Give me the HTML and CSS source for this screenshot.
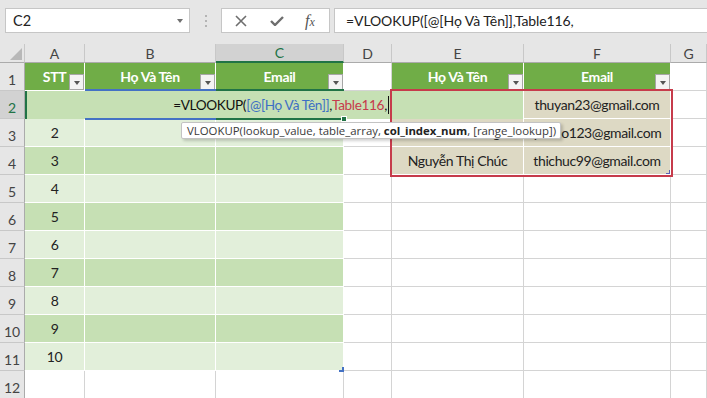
FILE: index.html
```html
<!DOCTYPE html>
<html>
<head>
<meta charset="utf-8">
<title>VLOOKUP</title>
<link rel="stylesheet" href="styles.css">
</head>
<body>
<div class="app">
	<!-- thanh công thức -->
	<div class="fbar">
		<div class="namebox">C2<span class="caret"></span></div>
		<div class="grip"><i></i><i></i><i></i></div>
		<div class="fbtns">
			<svg width="12" height="12" viewBox="0 0 12 12"><path d="M1 1L11 11M11 1L1 11" stroke="#6e6e6e" stroke-width="1.6" fill="none"/></svg>
			<svg width="14" height="10" viewBox="0 0 14 10"><path d="M1 5L5 9L13 1" stroke="#6e6e6e" stroke-width="2.4" fill="none"/></svg>
			<span class="fx">f<small>x</small></span>
		</div>
		<div class="finput">=VLOOKUP([@[Họ Và Tên]],Table116,</div>
	</div>

	<!-- bảng tính -->
	<div class="sheet">
		<div class="c cor"><span class="tri"></span></div>
		<div class="c hd">A</div>
		<div class="c hd">B</div>
		<div class="c hd on">C</div>
		<div class="c hd">D</div>
		<div class="c hd">E</div>
		<div class="c hd">F</div>
		<div class="c hd">G</div>

		<div class="c rh">1</div>
		<div class="c th">STT<span class="flt"></span></div>
		<div class="c th">Họ Và Tên<span class="flt"></span></div>
		<div class="c th">Email<span class="flt"></span></div>
		<div class="c"></div>
		<div class="c th">Họ Và Tên<span class="flt"></span></div>
		<div class="c th">Email<span class="flt"></span></div>
		<div class="c"></div>

		<div class="c rh on">2</div>
		<div class="c b1">1</div><div class="c b1"></div><div class="c b1"></div>
		<div class="c"></div>
		<div class="c sel"></div><div class="c sel">thuyan23@gmail.com</div>
		<div class="c"></div>

		<div class="c rh">3</div>
		<div class="c b2">2</div><div class="c b2"></div><div class="c b2"></div>
		<div class="c"></div>
		<div class="c sel">Trần Văn Hùng</div><div class="c sel">yenho123@gmail.com</div>
		<div class="c"></div>

		<div class="c rh">4</div>
		<div class="c b1">3</div><div class="c b1"></div><div class="c b1"></div>
		<div class="c"></div>
		<div class="c sel">Nguyễn Thị Chúc</div><div class="c sel">thichuc99@gmail.com</div>
		<div class="c"></div>

		<div class="c rh">5</div>
		<div class="c b2">4</div><div class="c b2"></div><div class="c b2"></div>
		<div class="c"></div><div class="c"></div><div class="c"></div><div class="c"></div>

		<div class="c rh">6</div>
		<div class="c b1">5</div><div class="c b1"></div><div class="c b1"></div>
		<div class="c"></div><div class="c"></div><div class="c"></div><div class="c"></div>

		<div class="c rh">7</div>
		<div class="c b2">6</div><div class="c b2"></div><div class="c b2"></div>
		<div class="c"></div><div class="c"></div><div class="c"></div><div class="c"></div>

		<div class="c rh">8</div>
		<div class="c b1">7</div><div class="c b1"></div><div class="c b1"></div>
		<div class="c"></div><div class="c"></div><div class="c"></div><div class="c"></div>

		<div class="c rh">9</div>
		<div class="c b2">8</div><div class="c b2"></div><div class="c b2"></div>
		<div class="c"></div><div class="c"></div><div class="c"></div><div class="c"></div>

		<div class="c rh">10</div>
		<div class="c b1">9</div><div class="c b1"></div><div class="c b1"></div>
		<div class="c"></div><div class="c"></div><div class="c"></div><div class="c"></div>

		<div class="c rh">11</div>
		<div class="c b2">10</div><div class="c b2"></div><div class="c b2"></div>
		<div class="c"></div><div class="c"></div><div class="c"></div><div class="c"></div>

		<div class="c rh">12</div>
		<div class="c"></div><div class="c"></div><div class="c"></div>
		<div class="c"></div><div class="c"></div><div class="c"></div><div class="c"></div>

		<!-- ô đang sửa C2 -->
		<div class="edit">=VLOOKUP(<span class="r1">[@[Họ Và Tên]]</span>,<span class="r2">Table116</span>,<span class="cur"></span></div>
		<div class="refb"></div>
		<div class="actc"><span class="handle"></span></div>
		<div class="rng"><span class="rmark"></span></div>
		<div class="tip">VLOOKUP(lookup_value, table_array, <b>col_index_num</b>, [range_lookup])</div>
		<div class="rsz"></div>
	</div>
</div>
</body>
</html>
```

FILE: styles.css
```css
body{
	margin:0;
	background:#fff;
}
.app{
	width:707px;
	height:398px;
	overflow:hidden;
	font-family:Lato, "Noto Sans", sans-serif;
}
.fbar{
	height:44px;
	background:#e6e6e6;
	display:flex;
	align-items:flex-start;
	padding:8px 0 0 5px;
	box-sizing:border-box;
}
.namebox{
	width:185px;
	height:25px;
	box-sizing:border-box;
	background:#fff;
	border:1px solid #c6c6c6;
	font-size:14.5px;
	color:#222;
	padding-left:7px;
	line-height:23px;
	position:relative;
}
.caret{
	position:absolute;
	right:6px;
	top:10px;
	border-left:3px solid transparent;
	border-right:3px solid transparent;
	border-top:4px solid #707070;
}
.grip{
	width:31px;
	height:25px;
	display:flex;
	flex-direction:column;
	align-items:center;
	justify-content:center;
	gap:3px;
}
.grip i{
	width:2px;
	height:2px;
	background:#b4b4b4;
}
.fbtns{
	width:109px;
	height:25px;
	box-sizing:border-box;
	background:#fff;
	border:1px solid #c6c6c6;
	display:flex;
	align-items:center;
	padding-left:13px;
	gap:23px;
}
.fx{
	font-family:"Liberation Serif", serif;
	font-style:italic;
	font-size:16px;
	color:#555;
	margin-left:-2px;
}
.fx small{
	font-size:12px;
}
.finput{
	flex:1;
	margin-left:4px;
	height:25px;
	box-sizing:border-box;
	background:#fff;
	border:1px solid #c6c6c6;
	border-right:none;
	font-size:14px;
	letter-spacing:-0.1px;
	color:#222;
	padding-left:11px;
	line-height:24px;
}

.sheet{
	display:grid;
	grid-template-columns:25px 60px 131px 128px 48px 132px 147px 36px;
	grid-template-rows:19px repeat(12, 28px);
	position:relative;
	font-size:14px;
	letter-spacing:-0.4px;
	color:#222;
}
.c{
	box-sizing:border-box;
	border-right:1px solid #d4d4d4;
	border-bottom:1px solid #d4d4d4;
	display:flex;
	align-items:center;
	justify-content:center;
	white-space:nowrap;
	overflow:hidden;
	position:relative;
}
.cor{
	background:#e6e6e6;
	border-right-color:#c8c8c8;
	border-bottom-color:#ababab;
}
.tri{
	position:absolute;
	right:2px;
	bottom:2px;
	border-left:12px solid transparent;
	border-bottom:12px solid #b8b8b8;
}
.hd{
	background:#e6e6e6;
	color:#444;
	border-right-color:#c8c8c8;
	border-bottom-color:#ababab;
	font-size:14px;
	letter-spacing:0;
}
.hd.on{
	background:#d2d2d2;
	color:#217346;
	border-bottom:2px solid #217346;
}
.rh{
	background:#e6e6e6;
	color:#444;
	border-right-color:#ababab;
	border-bottom-color:#c8c8c8;
	align-items:flex-end;
	padding-bottom:2px;
	font-size:14px;
	letter-spacing:0;
}
.rh.on{
	background:#d2d2d2;
	color:#217346;
}
.th{
	background:#70ad47;
	color:#fff;
	font-weight:bold;
	border-color:#fff;
}
.flt{
	position:absolute;
	right:0;
	bottom:0;
	width:15px;
	height:16px;
	box-sizing:border-box;
	background:#f3f3f3;
	border:1px solid #a6a6a6;
}
.flt:after{
	content:"";
	position:absolute;
	left:4px;
	top:6px;
	border-left:3px solid transparent;
	border-right:3px solid transparent;
	border-top:4px solid #555;
}
.b1{
	background:#c6e0b4;
	border-color:#fff;
}
.b2{
	background:#e2efda;
	border-color:#fff;
}
.sel{
	background:#ddd9c4;
	border-color:#fff;
}

/* lớp phủ khi đang sửa công thức */
.edit{
	position:absolute;
	left:25px;
	top:47px;
	width:498px;
	height:28px;
	box-sizing:border-box;
	background:#c6e0b4;
	border-left:2px solid #217346;
	display:flex;
	align-items:center;
	justify-content:center;
	padding-left:12px;
	font-size:13.6px;
	letter-spacing:-0.35px;
	color:#111;
	white-space:nowrap;
}
.r1{
	color:#3d6fc4;
}
.r2{
	color:#c63b4b;
}
.cur{
	width:1px;
	height:18px;
	background:#111;
	margin-left:1px;
}
.refb{
	position:absolute;
	left:85px;
	top:45px;
	width:131px;
	height:31px;
	box-sizing:border-box;
	border-top:2px solid #4472c4;
	border-bottom:2px solid #4472c4;
}
.actc{
	position:absolute;
	left:216px;
	top:45px;
	width:128px;
	height:31px;
	box-sizing:border-box;
	border-top:2px solid #217346;
	border-bottom:2px solid #217346;
}
.handle{
	position:absolute;
	right:-3px;
	bottom:-4px;
	width:6px;
	height:6px;
	box-sizing:border-box;
	background:#217346;
	border:1px solid #fff;
}
.rng{
	position:absolute;
	left:390px;
	top:45px;
	width:283px;
	height:88px;
	box-sizing:border-box;
	border:2px solid #c63b4b;
}
.rmark{
	position:absolute;
	right:1px;
	bottom:1px;
	width:3px;
	height:3px;
	border-right:1px solid #5b5fb5;
	border-bottom:1px solid #5b5fb5;
}
.tip{
	position:absolute;
	left:181px;
	top:78px;
	width:380px;
	height:17px;
	box-sizing:border-box;
	background:#fff;
	border:1px solid #c3c3c3;
	border-radius:2px;
	box-shadow:2px 2px 3px rgba(0,0,0,0.18);
	font-family:"Open Sans", sans-serif;
	font-size:11.4px;
	letter-spacing:0;
	color:#3a3a3a;
	line-height:15px;
	padding-left:5px;
	white-space:nowrap;
}
.tip b{
	color:#222;
}
.rsz{
	position:absolute;
	left:339px;
	top:323px;
	width:3px;
	height:3px;
	border-right:2px solid #4472c4;
	border-bottom:2px solid #4472c4;
}
```
